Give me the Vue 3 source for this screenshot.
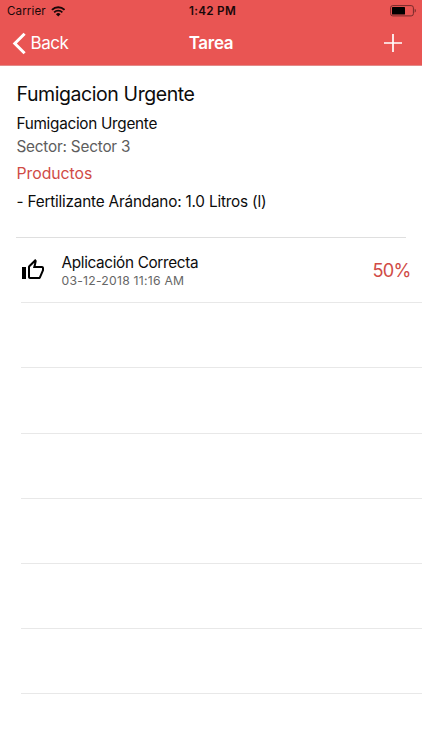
<script setup>
const task = {
  title: 'Fumigacion Urgente',
  description: 'Fumigacion Urgente',
  sector: 'Sector: Sector 3',
  products: ['- Fertilizante Arándano: 1.0 Litros (l)'],
}
const entries = [{ name: 'Aplicación Correcta', date: '03-12-2018 11:16 AM', progress: '50%' }]
const emptyRows = 6
</script>

<template>
  <div class="screen">
    <header class="top">
      <div class="status">
        <div class="carrier">
          <span>Carrier</span>
          <svg class="wifi" viewBox="0 0 14 11" aria-hidden="true">
            <path d="M.7 3.9a9 9 0 0 1 12.6 0" fill="none" stroke="#190809" stroke-width="2" />
            <path d="M2.9 6.3a5.8 5.8 0 0 1 8.2 0" fill="none" stroke="#190809" stroke-width="1.8" />
            <path d="M7 10.6 4.7 8.2a3.3 3.3 0 0 1 4.6 0z" fill="#190809" />
          </svg>
        </div>
        <span class="clock">1:42 PM</span>
        <svg class="battery" viewBox="0 0 27 12" aria-hidden="true">
          <rect x=".6" y=".6" width="22.8" height="10.3" rx="2.2" fill="none" stroke="#762a2a" stroke-width="1" />
          <rect x="2" y="2" width="13" height="7.5" rx=".6" fill="#000" />
          <path d="M24.7 3.8c1.6.8 1.6 3.1 0 3.9z" fill="#762a2a" />
        </svg>
      </div>
      <nav class="nav">
        <div class="back">
          <svg class="chevron" viewBox="0 0 14 23" aria-hidden="true">
            <path d="M12.6 1.7 2.8 11.5l9.8 9.8" fill="none" stroke="#fff" stroke-width="3" />
          </svg>
          <span class="back-label">Back</span>
        </div>
        <h1 class="heading">Tarea</h1>
        <svg class="plus" viewBox="0 0 18 18" aria-hidden="true">
          <path d="M9 0v18M0 9h18" stroke="#fff" stroke-width="1.7" />
        </svg>
      </nav>
    </header>

    <section class="details">
      <h2 class="title">{{ task.title }}</h2>
      <p class="description">{{ task.description }}</p>
      <p class="sector">{{ task.sector }}</p>
      <h3 class="products">Productos</h3>
      <p v-for="p in task.products" :key="p" class="product">{{ p }}</p>
    </section>

    <ul class="list">
      <li v-for="e in entries" :key="e.date" class="row">
        <svg class="thumb" viewBox="0 0 24 24" aria-hidden="true">
          <path d="M9 21h9c.83 0 1.54-.5 1.84-1.22l3.02-7.05c.09-.23.14-.47.14-.73v-2c0-1.1-.9-2-2-2h-6.31l.95-4.57.03-.32c0-.41-.17-.79-.44-1.06L14.17 1 7.58 7.59C7.22 7.95 7 8.45 7 9v10c0 1.1.9 2 2 2zM9 9l4.34-4.34L12 10h9v2l-3 7H9V9zM1 9h4v12H1z" />
        </svg>
        <div class="info">
          <span class="name">{{ e.name }}</span>
          <span class="date">{{ e.date }}</span>
        </div>
        <span class="progress">{{ e.progress }}</span>
      </li>
      <li v-for="n in emptyRows" :key="n" class="row"></li>
    </ul>
  </div>
</template>

<style>
body {
  margin: 0;
  background: #fff;
}
</style>

<style scoped>
.screen {
  width: 422px;
  height: 750px;
  overflow: hidden;
  background: #fff;
  color: #0c0c0c;
  font-family: Inter, "Liberation Sans", sans-serif;
}
.top {
  box-sizing: border-box;
  height: 66px;
  background: #e95553;
  border-bottom: 1px solid #e38a88;
}
.status {
  display: grid;
  grid-template-columns: 1fr auto 1fr;
  align-items: center;
  height: 22px;
  padding: 0 5px 0 7px;
  color: #190809;
}
.carrier {
  display: flex;
  align-items: center;
  gap: 5.2px;
  font-size: 11.6px;
  letter-spacing: 0.1px;
}
.wifi {
  width: 14.5px;
  height: 11px;
}
.clock {
  font-size: 11.7px;
  font-weight: 600;
  letter-spacing: 0.3px;
  padding-left: 1px;
}
.battery {
  justify-self: end;
  width: 27px;
  height: 12px;
}
.nav {
  display: grid;
  grid-template-columns: 1fr auto 1fr;
  align-items: center;
  height: 42px;
  padding: 0 20px 0 12px;
  color: #fff;
}
.back {
  display: flex;
  align-items: center;
  gap: 4.5px;
}
.chevron {
  width: 14px;
  height: 23px;
}
.back-label {
  font-size: 17px;
  letter-spacing: -0.45px;
}
.heading {
  margin: 0;
  padding-left: 8px;
  font-size: 17px;
  font-weight: 600;
  letter-spacing: -0.3px;
}
.plus {
  justify-self: end;
  width: 18px;
  height: 18px;
}
.details {
  box-sizing: border-box;
  height: 172px;
  margin: 0 16px;
  padding: 14px 0 0 0.5px;
  border-bottom: 1px solid #dfdfdf;
  white-space: nowrap;
}
.details > * {
  margin: 0;
  font-weight: 400;
}
.title {
  font-size: 19.5px;
  line-height: 29px;
  letter-spacing: -0.42px;
}
.description {
  font-size: 15.3px;
  line-height: 30px;
  letter-spacing: -0.28px;
}
.sector {
  font-size: 15.3px;
  line-height: 16px;
  color: #5d5d5d;
  letter-spacing: -0.2px;
}
.products {
  font-size: 15.8px;
  line-height: 38px;
  color: #d04b46;
  letter-spacing: -0.04px;
}
.product {
  font-size: 15.3px;
  line-height: 18px;
  letter-spacing: -0.19px;
}
.list {
  margin: 0;
  padding: 0 0 0 20.5px;
  list-style: none;
}
.row {
  box-sizing: border-box;
  display: flex;
  align-items: center;
  height: 65.2px;
  padding-right: 11.5px;
  border-bottom: 1px solid #e8e8e8;
}
.thumb {
  width: 24px;
  height: 24px;
  fill: #000;
}
.info {
  display: flex;
  flex: 1;
  flex-direction: column;
  padding-left: 17px;
  white-space: nowrap;
}
.name {
  font-size: 15.3px;
  line-height: 20px;
  letter-spacing: -0.33px;
}
.date {
  font-size: 12.2px;
  line-height: 15px;
  color: #666;
  letter-spacing: 0.24px;
}
.progress {
  font-size: 18.2px;
  color: #d04b46;
  letter-spacing: -0.8px;
}
</style>
